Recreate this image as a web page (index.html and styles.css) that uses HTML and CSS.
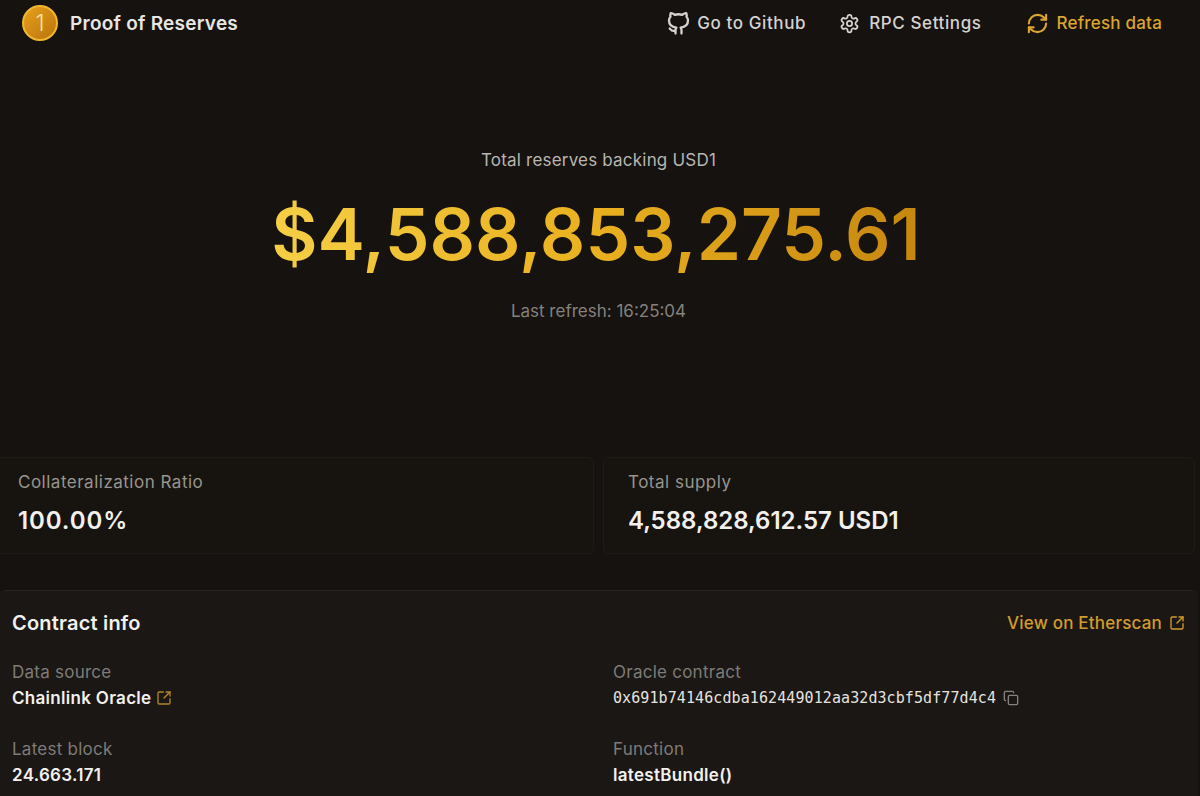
FILE: index.html
```html
<!DOCTYPE html>
<html lang="en">
<head>
    <meta charset="UTF-8">
    <title>Proof of Reserves</title>
    <link rel="stylesheet" href="styles.css">
</head>
<body>
    <header class="topbar">
        <div class="brand">
            <svg class="coin" viewBox="0 0 36 36" width="36" height="36">
                <defs>
                    <linearGradient id="coinFill" x1="0" y1="0" x2="1" y2="1">
                        <stop offset="0" stop-color="#e9a21c"/>
                        <stop offset="1" stop-color="#b8720c"/>
                    </linearGradient>
                </defs>
                <circle cx="18" cy="18" r="17" fill="url(#coinFill)" stroke="#f0b731" stroke-width="2"/>
                <text x="18" y="26" text-anchor="middle" class="coin-num">1</text>
            </svg>
            <span class="brand-name">Proof of Reserves</span>
        </div>
        <nav class="actions">
            <a class="action action-git">
                <svg viewBox="0 0 24 24" width="24" height="24" fill="none" stroke="currentColor" stroke-width="2.3" stroke-linecap="round" stroke-linejoin="round">
                    <path d="M15.500 22.500v-3.500c0-1-.3-1.800-.9-2.400 3.800-.4 7.400-2 7.400-7 0-1.500-.5-2.800-1.500-3.800.3-1 .3-2.400-.2-3.600 0 0-1.500-.2-4 1.600a14 14 0 0 0-7.600 0c-2.500-1.800-4-1.600-4-1.600-.5 1.200-.5 2.600-.2 3.600-1 1-1.500 2.300-1.500 3.800 0 5 3.600 6.600 7.400 7-.6.600-.9 1.400-.9 2.400v3.500"/>
                    <path d="M8.500 19.800c-2.800.7-3.600-1-4.800-2.300"/>
                </svg>
                Go to Github
            </a>
            <a class="action action-rpc">
                <svg viewBox="0 0 24 24" width="21" height="21" fill="none" stroke="currentColor" stroke-width="2" stroke-linecap="round" stroke-linejoin="round">
                    <path d="M12.22 2h-.44a2 2 0 0 0-2 2v.18a2 2 0 0 1-1 1.73l-.43.25a2 2 0 0 1-2 0l-.15-.08a2 2 0 0 0-2.73.73l-.22.38a2 2 0 0 0 .73 2.73l.15.1a2 2 0 0 1 1 1.72v.51a2 2 0 0 1-1 1.74l-.15.09a2 2 0 0 0-.73 2.73l.22.38a2 2 0 0 0 2.73.73l.15-.08a2 2 0 0 1 2 0l.43.25a2 2 0 0 1 1 1.73V20a2 2 0 0 0 2 2h.44a2 2 0 0 0 2-2v-.18a2 2 0 0 1 1-1.73l.43-.25a2 2 0 0 1 2 0l.15.08a2 2 0 0 0 2.73-.73l.22-.39a2 2 0 0 0-.73-2.73l-.15-.08a2 2 0 0 1-1-1.74v-.5a2 2 0 0 1 1-1.74l.15-.09a2 2 0 0 0 .73-2.73l-.22-.38a2 2 0 0 0-2.73-.73l-.15.08a2 2 0 0 1-2 0l-.43-.25a2 2 0 0 1-1-1.73V4a2 2 0 0 0-2-2z"/>
                    <circle cx="12" cy="12" r="3"/>
                </svg>
                RPC Settings
            </a>
            <a class="action action-refresh">
                <svg viewBox="0 0 24 24" width="23" height="23" fill="none" stroke="currentColor" stroke-width="2.2" stroke-linecap="round" stroke-linejoin="round">
                    <path d="M3 12a9 9 0 0 1 9-9 9.75 9.75 0 0 1 6.74 2.74L21 8"/>
                    <path d="M21 3v5h-5"/>
                    <path d="M21 12a9 9 0 0 1-9 9 9.75 9.75 0 0 1-6.74-2.74L3 16"/>
                    <path d="M8 16H3v5"/>
                </svg>
                Refresh data
            </a>
        </nav>
    </header>

    <section class="hero">
        <p class="hero-label">Total reserves backing USD1</p>
        <h1 class="hero-amount">$4,588,853,275.61</h1>
        <p class="hero-time">Last refresh: 16:25:04</p>
    </section>

    <section class="stats">
        <div class="stat-card">
            <p class="stat-label">Collateralization Ratio</p>
            <p class="stat-value ratio">100.00%</p>
        </div>
        <div class="stat-card">
            <p class="stat-label">Total supply</p>
            <p class="stat-value">4,588,828,612.57 USD1</p>
        </div>
    </section>

    <section class="contract">
        <div class="contract-head">
            <h2>Contract info</h2>
            <a class="etherscan">
                View on Etherscan
                <svg viewBox="0 0 24 24" width="16" height="16" fill="none" stroke="currentColor" stroke-width="2" stroke-linecap="round" stroke-linejoin="round">
                    <path d="M21 13v6a2 2 0 0 1-2 2H5a2 2 0 0 1-2-2V5a2 2 0 0 1 2-2h6"/>
                    <path d="m21 3-9 9"/>
                    <path d="M15 3h6v6"/>
                </svg>
            </a>
        </div>
        <div class="contract-grid">
            <div class="field">
                <p class="field-label">Data source</p>
                <p class="field-value">Chainlink Oracle
                    <svg class="gold-icon" viewBox="0 0 24 24" width="16" height="16" fill="none" stroke="currentColor" stroke-width="2" stroke-linecap="round" stroke-linejoin="round">
                        <path d="M21 13v6a2 2 0 0 1-2 2H5a2 2 0 0 1-2-2V5a2 2 0 0 1 2-2h6"/>
                        <path d="m21 3-9 9"/>
                        <path d="M15 3h6v6"/>
                    </svg>
                </p>
            </div>
            <div class="field">
                <p class="field-label">Oracle contract</p>
                <p class="field-value mono">0x691b74146cdba162449012aa32d3cbf5df77d4c4
                    <svg class="copy-icon" viewBox="0 0 24 24" width="16" height="16" fill="none" stroke="currentColor" stroke-width="2" stroke-linecap="round" stroke-linejoin="round">
                        <rect x="8" y="8" width="14" height="14" rx="2"/>
                        <path d="M4 16a2 2 0 0 1-2-2V4a2 2 0 0 1 2-2h10a2 2 0 0 1 2 2"/>
                    </svg>
                </p>
            </div>
            <div class="field">
                <p class="field-label">Latest block</p>
                <p class="field-value">24.663.171</p>
            </div>
            <div class="field">
                <p class="field-label">Function</p>
                <p class="field-value">latestBundle()</p>
            </div>
        </div>
    </section>
</body>
</html>
```

FILE: styles.css
```css
* {
    box-sizing: border-box;
}

html,
body {
    height: 796px;
    overflow: hidden;
}

body {
    font-family: Inter, "Liberation Sans", sans-serif;
    background-color: #15120f;
    color: #f2f0ec;
    margin: 0;
}

p,
h1,
h2 {
    margin: 0;
}

.topbar {
    display: flex;
    justify-content: space-between;
    align-items: center;
    height: 46px;
    padding: 0 38px 0 22px;
}

.brand {
    display: flex;
    align-items: center;
    gap: 12px;
}

.coin {
    display: block;
}

.coin-num {
    font-size: 23px;
    font-weight: 300;
    fill: #f9e3a3;
}

.brand-name {
    font-size: 19px;
    font-weight: 600;
    letter-spacing: 0.25px;
    color: #e8e6e2;
}

.actions {
    display: flex;
    align-items: center;
}

.action {
    display: flex;
    align-items: center;
    font-size: 17px;
    font-weight: 500;
    letter-spacing: 0.6px;
    color: #d6d3cf;
}

.action-git {
    gap: 7px;
    margin-right: 33px;
}

.action-rpc {
    gap: 9px;
    margin-right: 44px;
}

.action-refresh {
    gap: 8px;
    letter-spacing: 0.2px;
    color: #dca52c;
}

.hero {
    display: flex;
    flex-direction: column;
    align-items: center;
    padding: 104px 3px 0 0;
    height: 411px;
}

.hero-label {
    font-size: 17px;
    line-height: 20px;
    letter-spacing: 0.2px;
    color: #b9b5b0;
}

.hero-amount {
    font-size: 71.2px;
    line-height: 88px;
    font-weight: 600;
    margin: 20px 5px 0 0;
    background: linear-gradient(90deg, #f5cf45, #e9b01f 50%, #c6870f);
    -webkit-background-clip: text;
    background-clip: text;
    color: transparent;
}

.hero-time {
    font-size: 17px;
    line-height: 20px;
    margin-top: 23px;
    color: #85817c;
}

.stats {
    display: grid;
    grid-template-columns: 601px 592px;
    gap: 9px;
    margin-left: -7px;
}

.stat-card {
    height: 97px;
    padding: 14px 24px;
    border: 1px solid #1f1b17;
    border-radius: 6px;
    background-color: #171410;
}

.stat-label {
    font-size: 17px;
    line-height: 20px;
    letter-spacing: 0.5px;
    color: #99948e;
}

.stat-value {
    font-size: 24px;
    line-height: 28px;
    font-weight: 600;
    margin-top: 15px;
}

.ratio {
    letter-spacing: 0.9px;
}

.contract {
    margin-top: 36px;
    margin-right: 2px;
    height: 206px;
    padding: 20px 13px 0 12px;
    background-color: #1a1715;
    border-top: 1px solid #262320;
    border-radius: 6px 6px 0 0;
}

.contract-head {
    display: flex;
    justify-content: space-between;
    align-items: center;
}

.contract-head h2 {
    font-size: 20px;
    line-height: 24px;
    font-weight: 600;
    letter-spacing: 0.2px;
}

.etherscan {
    display: flex;
    align-items: center;
    gap: 7px;
    font-size: 17px;
    font-weight: 500;
    letter-spacing: 0.2px;
    color: #d29c2c;
}

.contract-grid {
    display: grid;
    grid-template-columns: 601px 1fr;
    row-gap: 29px;
    margin-top: 27px;
}

.field-label {
    font-size: 17px;
    line-height: 20px;
    letter-spacing: 0.25px;
    color: #7f7b77;
}

.field-value {
    display: flex;
    align-items: center;
    gap: 5px;
    margin-top: 4px;
    height: 24px;
    font-size: 17px;
    font-weight: 600;
    letter-spacing: 0.3px;
}

.mono {
    font-family: "DejaVu Sans Mono", monospace;
    font-size: 15px;
    font-weight: 400;
    letter-spacing: 0.09px;
    color: #e6e3df;
    gap: 7px;
}

.gold-icon {
    color: #b3852c;
}

.copy-icon {
    color: #85817c;
}
```
